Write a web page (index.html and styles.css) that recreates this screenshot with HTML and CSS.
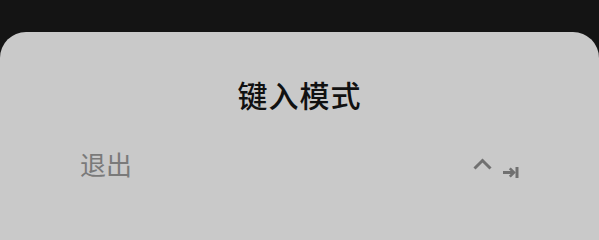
FILE: index.html
```html
<!DOCTYPE html>
<html lang="zh">
<head>
<meta charset="utf-8">
<link rel="stylesheet" href="styles.css">
</head>
<body>
<div class="sheet">
  <h1 class="title">键入模式</h1>
  <div class="row">
    <span class="exit">退出</span>
    <span class="keys">
      <svg class="chev" width="19" height="13" viewBox="0 0 19 13"><path d="M1.5 11.5 L9.5 3.5 L17.5 11.5" fill="none" stroke="#707070" stroke-width="3"/></svg>
      <svg class="tab" width="16" height="11" viewBox="0 0 16 11"><path d="M0 5.5 H10" stroke="#707070" stroke-width="3"/><path d="M6.8 1.3 L11 5.5 L6.8 9.7" fill="none" stroke="#707070" stroke-width="2.6"/><path d="M14 0 V11" stroke="#707070" stroke-width="3"/></svg>
    </span>
  </div>
</div>
</body>
</html>
```
FILE: styles.css
```css
html, body {
  margin: 0;
  padding: 0;
  height: 100%;
  background: #141414;
  overflow: hidden;
}
body {
  font-family: "Noto Sans CJK SC", "Noto Sans", sans-serif;
  padding-top: 32px;
  box-sizing: border-box;
}
.sheet {
  background: #c9c9c9;
  border-radius: 26px 26px 0 0;
  height: 100%;
  box-sizing: border-box;
  padding-top: 42px;
}
.title {
  margin: 0;
  text-align: center;
  font-size: 30px;
  line-height: 40px;
  font-weight: 500;
  color: #111111;
  letter-spacing: 1px;
}
.row {
  display: flex;
  align-items: center;
  justify-content: space-between;
  padding: 0 80px 0 80px;
  margin-top: 32px;
}
.exit {
  font-size: 26px;
  line-height: 36px;
  color: #7a7a7a;
}
.keys {
  display: flex;
  align-items: flex-start;
  gap: 11px;
  height: 22px;
  margin-top: 8px;
}
.tab {
  margin-top: 10px;
}
```
